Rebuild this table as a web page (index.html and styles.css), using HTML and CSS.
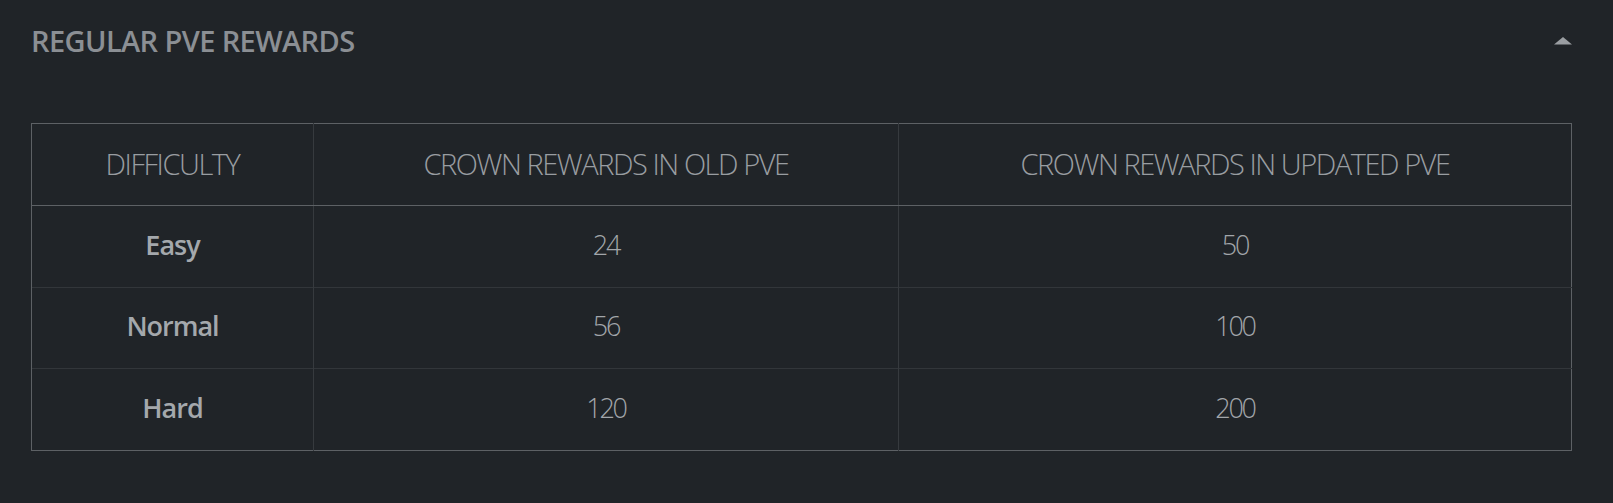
FILE: index.html
```html
<!DOCTYPE html>
<html lang="en">
<head>
<meta charset="utf-8">
<title>Regular PvE Rewards</title>
<link rel="stylesheet" href="styles.css">
</head>
<body>
<section class="panel">
  <header class="panel-head">
    <h2 class="panel-title">REGULAR PVE REWARDS</h2>
    <svg class="toggle" width="18" height="8" viewBox="0 0 18 8" aria-hidden="true"><polygon points="0,7.5 9,0 18,7.5" fill="#9a9ea2"/></svg>
  </header>
  <table class="rewards">
    <colgroup>
      <col class="c1"><col class="c2"><col class="c3">
    </colgroup>
    <thead>
      <tr><th>DIFFICULTY</th><th>CROWN REWARDS IN OLD PVE</th><th>CROWN REWARDS IN UPDATED PVE</th></tr>
    </thead>
    <tbody>
      <tr><td class="lvl">Easy</td><td>24</td><td>50</td></tr>
      <tr><td class="lvl">Normal</td><td>56</td><td>100</td></tr>
      <tr><td class="lvl">Hard</td><td>120</td><td>200</td></tr>
    </tbody>
  </table>
</section>
</body>
</html>
```
FILE: styles.css
```css
html, body {
  margin: 0;
  background: #202428;
}
body {
  font-family: "Open Sans", "Liberation Sans", sans-serif;
  width: 1613px;
  height: 503px;
  overflow: hidden;
}
.panel {
  padding: 21px 41px 0 31px;
}
.panel-head {
  display: flex;
  align-items: center;
  justify-content: space-between;
  height: 40px;
}
.panel-title {
  margin: 0;
  font-size: 29px;
  line-height: 40px;
  font-weight: 600;
  color: #8b8f94;
  letter-spacing: -0.6px;
}
.toggle {
  display: block;
}
.rewards {
  margin-top: 62px;
  width: 1540px;
  border-collapse: collapse;
  table-layout: fixed;
  border: 1px solid #5d6165;
}
.c1 { width: 282px; }
.c2 { width: 585px; }
.c3 { width: 673px; }
.rewards th {
  height: 78px;
  padding: 0 0 3px;
  font-size: 29px;
  font-weight: 300;
  letter-spacing: -1.45px;
  color: #999da1;
  text-align: center;
  border-bottom: 1px solid #5d6165;
  border-left: 1px solid #363a3e;
}
.rewards td {
  height: 76px;
  padding: 0 0 4.5px;
  font-size: 27px;
  font-weight: 300;
  letter-spacing: -2.2px;
  color: #a2a6aa;
  text-align: center;
  border-top: 1px solid #32363a;
  border-left: 1px solid #363a3e;
}
.rewards tbody tr:first-child td {
  border-top-color: #5d6165;
}
.rewards td.lvl {
  font-weight: 600;
  letter-spacing: -1px;
  color: #a4a8ac;
}
.rewards th:first-child,
.rewards td:first-child {
  border-left-color: #5d6165;
}
```
